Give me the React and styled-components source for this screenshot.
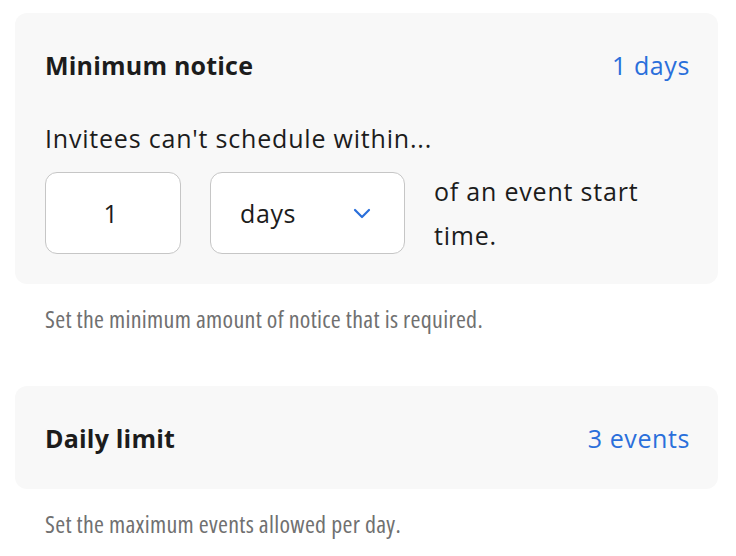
import React from 'react'
import styled, { createGlobalStyle } from 'styled-components'

const GlobalStyle = createGlobalStyle`
  body {
    margin: 0;
    background: #fff;
    font-family: "Open Sans", "Liberation Sans", sans-serif;
    color: #1c1c1c;
  }
`

const Page = styled.div`
  padding: 13px 18px 0 15px;
  display: flex;
  flex-direction: column;
`

const Card = styled.section`
  background: #f8f8f8;
  border-radius: 12px;
  padding: 36px 28px ${p => (p.compact ? '35px' : '27px')} 30px;
  display: flex;
  flex-direction: column;
`

const Header = styled.div`
  display: flex;
  justify-content: space-between;
  align-items: center;
  height: 32px;
`

const Title = styled.h3`
  margin: 0;
  font-size: 25px;
  font-weight: 700;
  letter-spacing: 0.2px;
`

const Value = styled.span`
  font-size: 25px;
  letter-spacing: 0.6px;
  color: #2a6fdb;
`

const Lead = styled.p`
  margin: 40px 0 17px;
  font-size: 25px;
  letter-spacing: 0.8px;
  line-height: 34px;
`

const Controls = styled.div`
  display: flex;
  align-items: flex-start;
  gap: 29px;
`

const Field = styled.div`
  box-sizing: border-box;
  height: 82px;
  width: ${p => p.width}px;
  background: #fff;
  border: 1px solid #c6c6c6;
  border-radius: 12px;
  display: flex;
  align-items: center;
  justify-content: ${p => (p.center ? 'center' : 'space-between')};
  padding: 0 33px 0 29px;
  font-size: 25px;
  letter-spacing: 0.6px;
`

const Trailing = styled.span`
  font-size: 25px;
  letter-spacing: 0.8px;
  line-height: 44px;
  width: 240px;
  margin-top: -3px;
`

const Note = styled.p`
  margin: 20px 0 ${p => (p.last ? '0' : '52px')} 30px;
  font-size: 24px;
  font-stretch: 80%;
  letter-spacing: 0.3px;
  line-height: 30px;
  color: #707070;
`

const Chevron = () => (
  <svg width="18" height="11" viewBox="0 0 18 11" fill="none">
    <path d="M2 2l7 7 7-7" stroke="#2a6fdb" strokeWidth="2.2" strokeLinecap="round" strokeLinejoin="round" />
  </svg>
)

const App = () => (
  <Page>
    <GlobalStyle />
    <Card>
      <Header>
        <Title>Minimum notice</Title>
        <Value>1 days</Value>
      </Header>
      <Lead>Invitees can't schedule within...</Lead>
      <Controls>
        <Field width={136} center>1</Field>
        <Field width={195}>
          days
          <Chevron />
        </Field>
        <Trailing>of an event start time.</Trailing>
      </Controls>
    </Card>
    <Note>Set the minimum amount of notice that is required.</Note>
    <Card compact>
      <Header>
        <Title>Daily limit</Title>
        <Value>3 events</Value>
      </Header>
    </Card>
    <Note last>Set the maximum events allowed per day.</Note>
  </Page>
)

export default App
